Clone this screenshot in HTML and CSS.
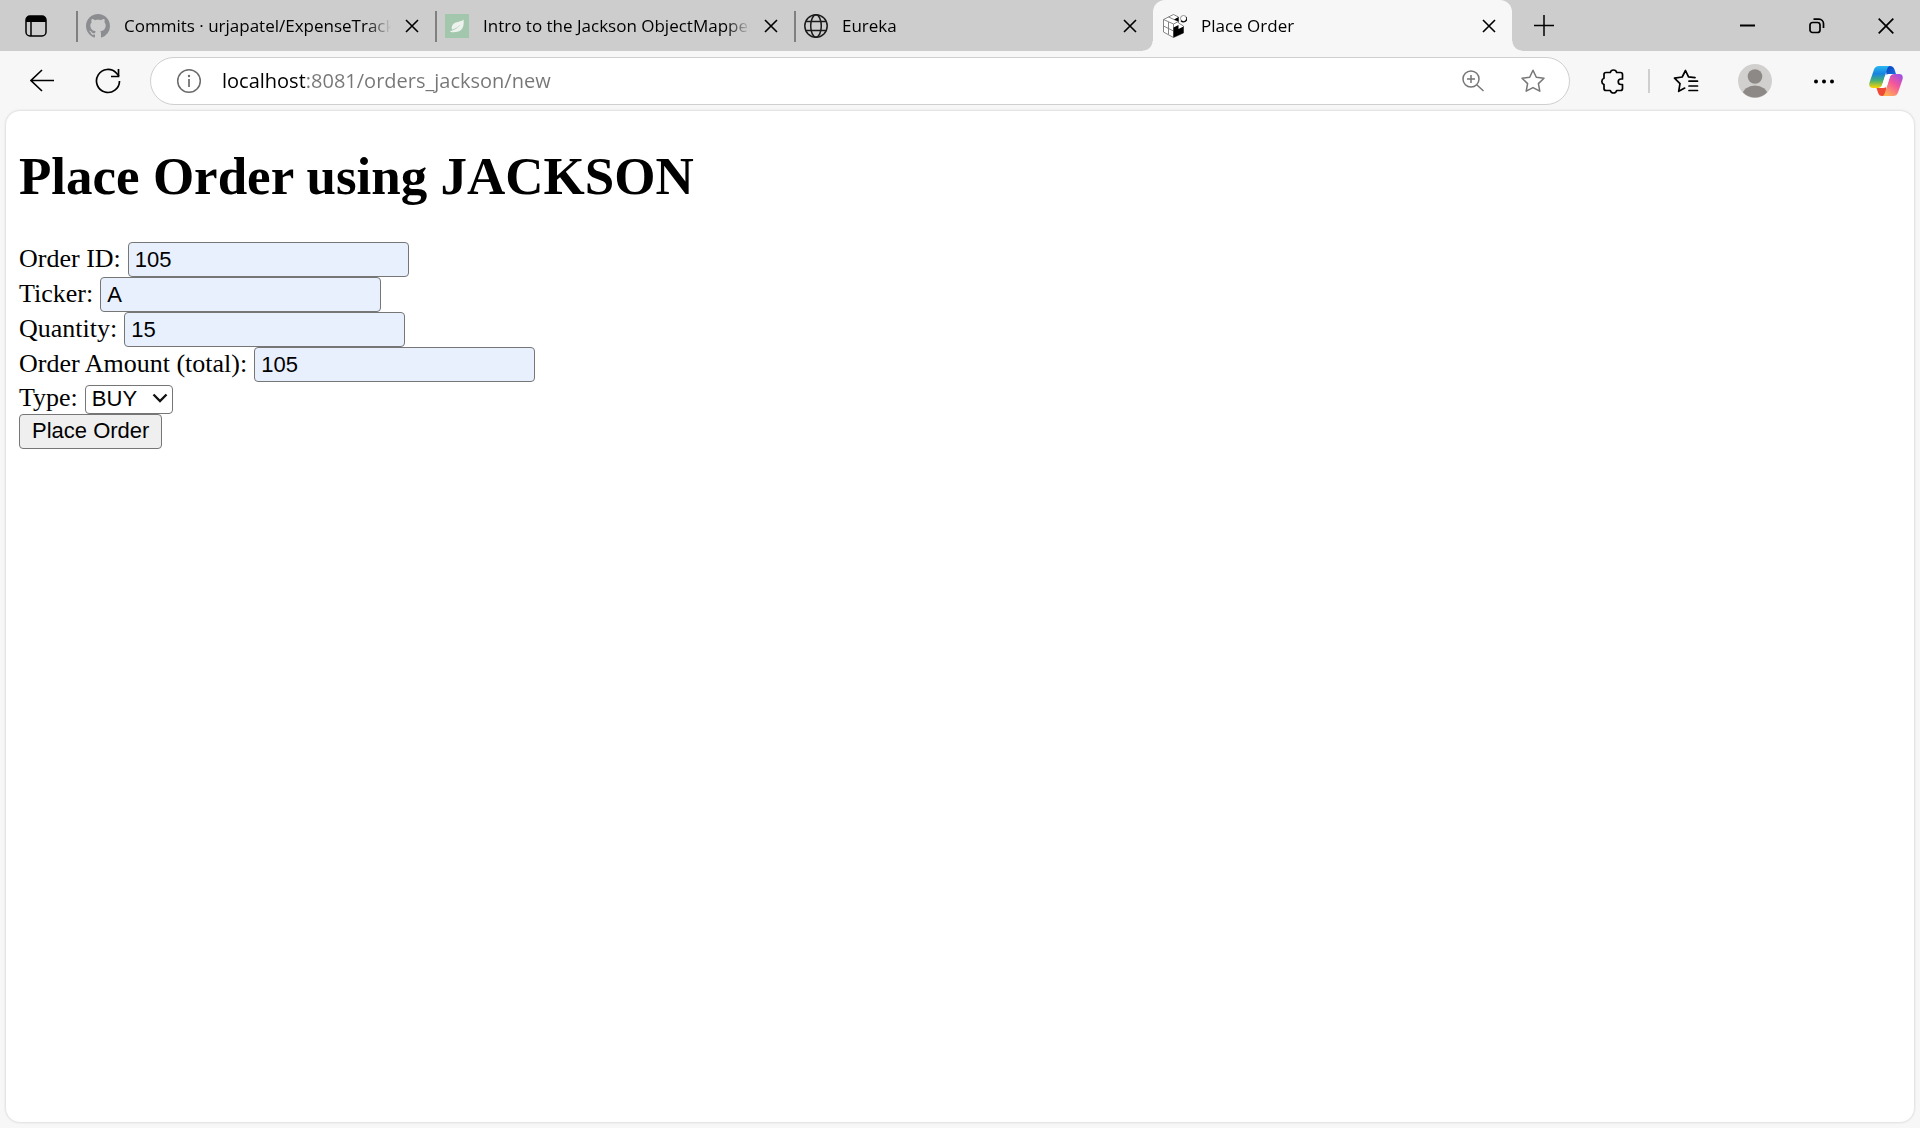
FILE: index.html
```html
<!DOCTYPE html>
<html lang="en">
<head>
<meta charset="utf-8">
<title>Place Order</title>
<link rel="stylesheet" href="styles.css">
</head>
<body>
<div class="browser">
  <header class="tab-strip">
    <button class="workspaces" aria-label="Tab actions">
      <svg width="22" height="22" viewBox="0 0 22 22"><rect x="1" y="1" width="20" height="20" rx="4" fill="none" stroke="#000" stroke-width="1.5"/><path d="M1 7V5a4 4 0 0 1 4-4h12a4 4 0 0 1 4 4v2z"/><path d="M6 6v15" stroke="#000" stroke-width="1.5"/></svg>
    </button>
    <div class="tabs">
      <div class="tab">
        <svg class="favicon" viewBox="0 0 16 16"><path fill="#8b8d90" d="M8 0C3.58 0 0 3.58 0 8c0 3.54 2.29 6.53 5.47 7.59.4.07.55-.17.55-.38 0-.19-.01-.82-.01-1.49-2.01.37-2.53-.49-2.69-.94-.09-.23-.48-.94-.82-1.13-.28-.15-.68-.52-.01-.53.63-.01 1.08.58 1.23.82.72 1.21 1.87.87 2.33.66.07-.52.28-.87.51-1.07-1.78-.2-3.64-.89-3.64-3.95 0-.87.31-1.59.82-2.15-.08-.2-.36-1.02.08-2.12 0 0 .67-.21 2.2.82.64-.18 1.32-.27 2-.27s1.36.09 2 .27c1.53-1.04 2.2-.82 2.2-.82.44 1.1.16 1.92.08 2.12.51.56.82 1.27.82 2.15 0 3.07-1.87 3.75-3.65 3.95.29.25.54.73.54 1.48 0 1.07-.01 1.93-.01 2.2 0 .21.15.46.55.38A8.01 8.01 0 0 0 16 8c0-4.42-3.58-8-8-8z"/></svg>
        <span class="tab-title">Commits · urjapatel/ExpenseTracker</span>
        <button class="tab-close" aria-label="Close tab"><svg width="14" height="14" viewBox="0 0 14 14"><path d="M1 1l12 12M13 1L1 13" stroke="#000" stroke-width="1.6"/></svg></button>
      </div>
      <div class="tab">
        <svg class="favicon" viewBox="0 0 24 24"><rect width="24" height="24" fill="#a2c7ac"/><path fill="#edf2ee" d="M18.500 5.500C17.500 8 10 7 7.500 11C6 13.500 7 15 7.200 15.700C9 15 13 13.500 15.500 10.500C13.500 14 9 16 5.200 17.200L5.500 18C13 18.800 17.500 17 18.500 11C18.800 9 18.800 7 18.500 5.500z"/></svg>
        <span class="tab-title">Intro to the Jackson ObjectMapper</span>
        <button class="tab-close" aria-label="Close tab"><svg width="14" height="14" viewBox="0 0 14 14"><path d="M1 1l12 12M13 1L1 13" stroke="#000" stroke-width="1.6"/></svg></button>
      </div>
      <div class="tab">
        <svg class="favicon" viewBox="0 0 24 24" fill="none" stroke="#1b1b1b" stroke-width="1.500"><circle cx="12" cy="12" r="11.200"/><ellipse cx="12" cy="12" rx="5.300" ry="11.200"/><path d="M2 7.500h20M2 16.500h20"/></svg>
        <span class="tab-title">Eureka</span>
        <button class="tab-close" aria-label="Close tab"><svg width="14" height="14" viewBox="0 0 14 14"><path d="M1 1l12 12M13 1L1 13" stroke="#000" stroke-width="1.6"/></svg></button>
      </div>
      <div class="tab tab-active">
        <svg class="favicon" viewBox="0 0 24 24"><path d="M0.500 5.500L10.500 0.500L15.500 3V9L20.500 12V19L10.500 23.500L0.500 18z" fill="#fff" stroke="#777" stroke-width=".9"/><path d="M0.500 5.500L10.500 10L15.500 7.500M5.500 3L15.500 7.500M0.500 12L10.500 17M5.500 8V20.500M10.500 10V23.500" fill="none" stroke="#777" stroke-width=".9"/><path d="M11 5.500L15.500 3V7.500zM10.500 13.500L15.500 11V15L20.500 12.500V19L10.500 23.500z"/><circle cx="20.500" cy="4.500" r="3" fill="#fff" stroke="#777" stroke-width=".8"/><path d="M18 6.800A3.500 3.500 0 0 0 23.700 3" fill="none" stroke="#000" stroke-width="1.300"/></svg>
        <span class="tab-title">Place Order</span>
        <button class="tab-close" aria-label="Close tab"><svg width="14" height="14" viewBox="0 0 14 14"><path d="M1 1l12 12M13 1L1 13" stroke="#000" stroke-width="1.6"/></svg></button>
      </div>
    </div>
    <button class="new-tab" aria-label="New tab"><svg width="22" height="22" viewBox="0 0 22 22"><path d="M11 0v21M1 10.500h20" stroke="#000" stroke-width="1.500"/></svg></button>
    <div class="window-controls">
      <button class="window-button" aria-label="Minimize"><svg width="16" height="16" viewBox="0 0 16 16"><path d="M0 7.500h15" stroke="#000" stroke-width="2"/></svg></button>
      <button class="window-button" aria-label="Restore"><svg width="16" height="16" viewBox="0 0 16 16" fill="none" stroke="#000" stroke-width="1.700"><rect x="1" y="4.500" width="10" height="10" rx="2.500"/><path d="M4.500 1.200H10A4.500 4.500 0 0 1 14.500 5.700V10"/></svg></button>
      <button class="window-button" aria-label="Close"><svg width="16" height="16" viewBox="0 0 16 16"><path d="M.7.700l14.600 14.600M15.300.700L.7 15.300" stroke="#000" stroke-width="1.700"/></svg></button>
    </div>
  </header>

  <nav class="toolbar">
    <div class="navigation">
      <button class="tool" aria-label="Back"><svg width="24" height="24" viewBox="0 0 24 24" fill="none" stroke="#000" stroke-width="1.600"><path d="M24 11.500H1M12 1L1 11.500 12 22"/></svg></button>
      <button class="tool" aria-label="Refresh"><svg width="26" height="26" viewBox="0 0 26 26" fill="none" stroke="#000" stroke-width="1.700"><path d="M24.500 13A11.500 11.500 0 1 1 21.500 5.200L24 8"/><path d="M23.500 1v7.500H16"/></svg></button>
    </div>
    <div class="address">
      <button class="address-tool" aria-label="View site information"><svg width="26" height="26" viewBox="0 0 26 26" fill="none" stroke="#6b6b6b" stroke-width="1.500"><circle cx="13" cy="13" r="11.300"/><path d="M13 11v8" stroke-width="1.700"/><circle cx="13" cy="8" r="1.200" fill="#6b6b6b" stroke="none"/></svg></button>
      <input class="url" type="text" aria-label="Address" value="localhost:8081/orders_jackson/new">
      <button class="address-tool" aria-label="Zoom"><svg width="24" height="24" viewBox="0 0 24 24" fill="none" stroke="#767676" stroke-width="1.500"><circle cx="10" cy="10" r="8"/><path d="M16 16l6.500 6M10 6v8M6 10h8"/></svg></button>
      <button class="address-tool" aria-label="Add to favorites"><svg width="26" height="26" viewBox="0 0 26 26" fill="none" stroke="#767676" stroke-width="1.500" stroke-linejoin="round"><path d="M13 2.200l3.300 7 7.700 1-5.600 5.400 1.400 7.600-6.800-3.600-6.800 3.600 1.400-7.600L2 10.200l7.700-1z"/></svg></button>
    </div>
    <button class="tool" aria-label="Extensions"><svg width="26" height="26" viewBox="0 0 26 26" fill="none" stroke="#000" stroke-width="1.700" stroke-linejoin="round"><path d="M7 4.500h4.300a3.300 3.300 0 0 1 6.400 0h3.800q2 0 2 2V11h-1.500a2.700 2.700 0 0 0 0 5.500h1.500V20.500q0 2-2 2h-3.800a3.300 3.300 0 0 1-6.400 0H7q-2 0-2-2v-4a3.300 3.300 0 0 1 0-6.200V6.500q0-2 2-2z"/></svg></button>
    <span class="tool-divider"></span>
    <button class="tool" aria-label="Favorites"><svg width="26" height="26" viewBox="0 0 26 26" fill="none" stroke="#000" stroke-width="1.700" stroke-linejoin="round" stroke-linecap="round"><path d="M22 9.700l-6.500-.8L12.500 2.500 9.200 9 1.500 10.200l5.500 5.400-1.300 7.700 6-3.200M16 13.200H24.500M16 18H24.500M16 22.500H24.500"/></svg></button>
    <button class="tool" aria-label="Profile"><svg width="34" height="34" viewBox="0 0 34 34"><clipPath id="avatar"><circle cx="17" cy="17" r="16.500"/></clipPath><circle cx="17" cy="17" r="17" fill="#d2d0ce"/><g clip-path="url(#avatar)" fill="#8d8986"><circle cx="17" cy="12.500" r="7.300"/><ellipse cx="17" cy="31" rx="12.500" ry="9.500"/></g></svg></button>
    <button class="tool" aria-label="Settings and more"><svg width="22" height="22" viewBox="0 0 22 22"><circle cx="3" cy="11.500" r="2"/><circle cx="11" cy="11.500" r="2"/><circle cx="19" cy="11.500" r="2"/></svg></button>
    <button class="tool tool-copilot" aria-label="Copilot"><svg width="34" height="32" viewBox="0 0 34 32">
      <defs>
        <linearGradient id="cool" x1="0" y1="0" x2="0" y2="1"><stop offset="0" stop-color="#28b8f0"/><stop offset=".35" stop-color="#1683e0"/><stop offset=".65" stop-color="#44ae78"/><stop offset="1" stop-color="#ffd500"/></linearGradient>
        <linearGradient id="warm" x1="1" y1="0" x2=".3" y2="1"><stop offset="0" stop-color="#9150ee"/><stop offset=".5" stop-color="#f5569c"/><stop offset="1" stop-color="#ffae54"/></linearGradient>
        <linearGradient id="deep" x1="0" y1="0" x2="1" y2="1"><stop offset="0" stop-color="#0d38bd"/><stop offset="1" stop-color="#187be5"/></linearGradient>
      </defs>
      <path d="M16 1h5q3.500 0 4.500 3.500L27 9h-5q-3 0-4 3z" fill="url(#deep)"/>
      <path d="M18 31h-5q-3 0-4-3.500L7.500 23H12q3.500 0 4.500-4z" fill="#ef4a36"/>
      <path d="M10 1h11q-2 0-3 3.500L13.500 19q-1.200 4-5 4H4q-4.800 0-3.500-5.500L5 4.500Q6.200 1 10 1z" fill="url(#cool)"/>
      <path d="M24 31H13q2 0 3-3.500L20.500 13q1.200-4 5-4H30q4.800 0 3.500 5.500L29 27.500Q27.800 31 24 31z" fill="url(#warm)"/>
      <path d="M20 9h4q-2.500 0-3.500 4l-2 6.500q-1 3.500-4.500 3.500h-4q2.500 0 3.500-4l2-6.500Q16.500 9 20 9z" fill="#fff"/>
    </svg></button>
  </nav>

  <main class="page">
    <h1 class="page-title">Place Order using JACKSON</h1>
    <form class="order-form">
      <div class="field"><label for="order-id">Order ID:</label><input class="text-input" id="order-id" type="text" value="105"></div>
      <div class="field"><label for="ticker">Ticker:</label><input class="text-input" id="ticker" type="text" value="A"></div>
      <div class="field"><label for="quantity">Quantity:</label><input class="text-input" id="quantity" type="text" value="15"></div>
      <div class="field"><label for="amount">Order Amount (total):</label><input class="text-input" id="amount" type="text" value="105"></div>
      <div class="field"><label for="type">Type:</label><span class="select-box"><select class="select" id="type"><option>BUY</option><option>SELL</option></select><svg class="chevron" width="16" height="10" viewBox="0 0 16 10"><path d="M1.500 1.500L8 8l6.500-6.500" fill="none" stroke="#111" stroke-width="2.300"/></svg></span></div>
      <button class="submit" type="button">Place Order</button>
    </form>
  </main>
</div>
</body>
</html>
```
FILE: styles.css
```css
* { box-sizing: border-box; }

body {
  margin: 0;
  background: #f7f7f7;
}

button {
  padding: 0;
  border: 0;
  background: none;
}

svg { display: block; flex: none; }

.browser {
  display: flex;
  flex-direction: column;
  min-height: 100vh;
  font-family: "Open Sans", "Noto Sans", sans-serif;
}

/* Tab strip */
.tab-strip {
  display: flex;
  height: 51px;
  background: #cdcdcd;
}

.workspaces {
  display: flex;
  align-items: center;
  justify-content: center;
  width: 72px;
  margin-right: 4px;
}

.tabs {
  display: flex;
  flex: 0 1 1436px;
  min-width: 0;
}

.tab {
  position: relative;
  display: flex;
  flex: 1;
  align-items: center;
  gap: 14px;
  min-width: 0;
  padding: 0 16px 0 10px;
}

.tab:not(.tab-active)::before {
  content: "";
  position: absolute;
  left: 0;
  top: 11px;
  width: 2px;
  height: 31px;
  background: #808080;
}

.tab-active {
  border-radius: 12px 12px 0 0;
  background: #f7f7f7;
}

.tab-active::before,
.tab-active::after {
  content: "";
  position: absolute;
  bottom: 0;
  width: 10px;
  height: 10px;
}

.tab-active::before {
  right: 100%;
  background: radial-gradient(circle at 0 0, #cdcdcd 9px, #f7f7f7 10px);
}

.tab-active::after {
  left: 100%;
  background: radial-gradient(circle at 100% 0, #cdcdcd 9px, #f7f7f7 10px);
}

.favicon {
  width: 24px;
  height: 24px;
}

.tab-title {
  flex: 1;
  overflow: hidden;
  white-space: nowrap;
  font-size: 17px;
  line-height: 24px;
  color: #000;
  -webkit-mask-image: linear-gradient(to left, transparent, #000 24px);
  mask-image: linear-gradient(to left, transparent, #000 24px);
}

.tab-close {
  display: flex;
  justify-content: center;
  width: 14px;
}

.new-tab {
  display: flex;
  align-items: center;
  justify-content: center;
  width: 64px;
}

.window-controls {
  display: flex;
  margin-left: auto;
}

.window-button {
  display: flex;
  align-items: center;
  justify-content: center;
  width: 69px;
}

/* Toolbar */
.toolbar {
  display: flex;
  align-items: center;
  gap: 3px;
  height: 60px;
  padding: 0 8px 0 9px;
}

.navigation { display: flex; }

.tool {
  display: flex;
  flex: none;
  align-items: center;
  justify-content: center;
  width: 66px;
  height: 48px;
}

.tool-copilot { width: 52px; }

.tool-divider {
  width: 2px;
  height: 24px;
  background: #cfcfcf;
}

.address {
  display: flex;
  flex: 1;
  align-items: center;
  height: 48px;
  margin: 0 6px;
  padding: 0 6px 0 8px;
  border: 1px solid #cfcfcf;
  border-radius: 24px;
  background: #fff;
}

.address-tool {
  display: flex;
  flex: none;
  align-items: center;
  justify-content: center;
  width: 60px;
  height: 46px;
}

.url {
  flex: 1;
  min-width: 0;
  height: 30px;
  padding: 0 0 0 3px;
  border: 0;
  outline: 0;
  background: linear-gradient(to right, #000 86px, #767676 86px);
  -webkit-background-clip: text;
  background-clip: text;
  color: transparent;
  font: 20px/30px "Open Sans", "Noto Sans", sans-serif;
}

/* Web page */
.page {
  flex: 1;
  margin: 0 6px 6px;
  padding: 35px 13px;
  border-radius: 14px;
  background: #fff;
  box-shadow: 0 0 3px rgba(0, 0, 0, 0.2);
  color: #000;
  font: 26px/31px "Liberation Serif", "Times New Roman", serif;
}

.page-title {
  margin: 0 0 35px;
  font-size: 53px;
  line-height: 61px;
}

.order-form {
  display: flex;
  flex-direction: column;
  align-items: flex-start;
}

.field {
  display: flex;
  align-items: baseline;
  gap: 7px;
}

.text-input,
.select,
.submit {
  height: 35px;
  border: 1px solid #767676;
  border-radius: 4px;
  color: #000;
  font: 22px/26px "Liberation Sans", Arial, sans-serif;
}

.text-input {
  width: 281px;
  padding: 0 6px;
  background: #e8f0fe;
}

.select-box { position: relative; }

.select {
  appearance: none;
  width: 88px;
  height: 29px;
  padding: 0 6px;
  background: #fff;
}

.chevron {
  position: absolute;
  right: 5px;
  top: 11px;
  pointer-events: none;
}

.submit {
  padding: 0 12px;
  background: #efefef;
}
```
